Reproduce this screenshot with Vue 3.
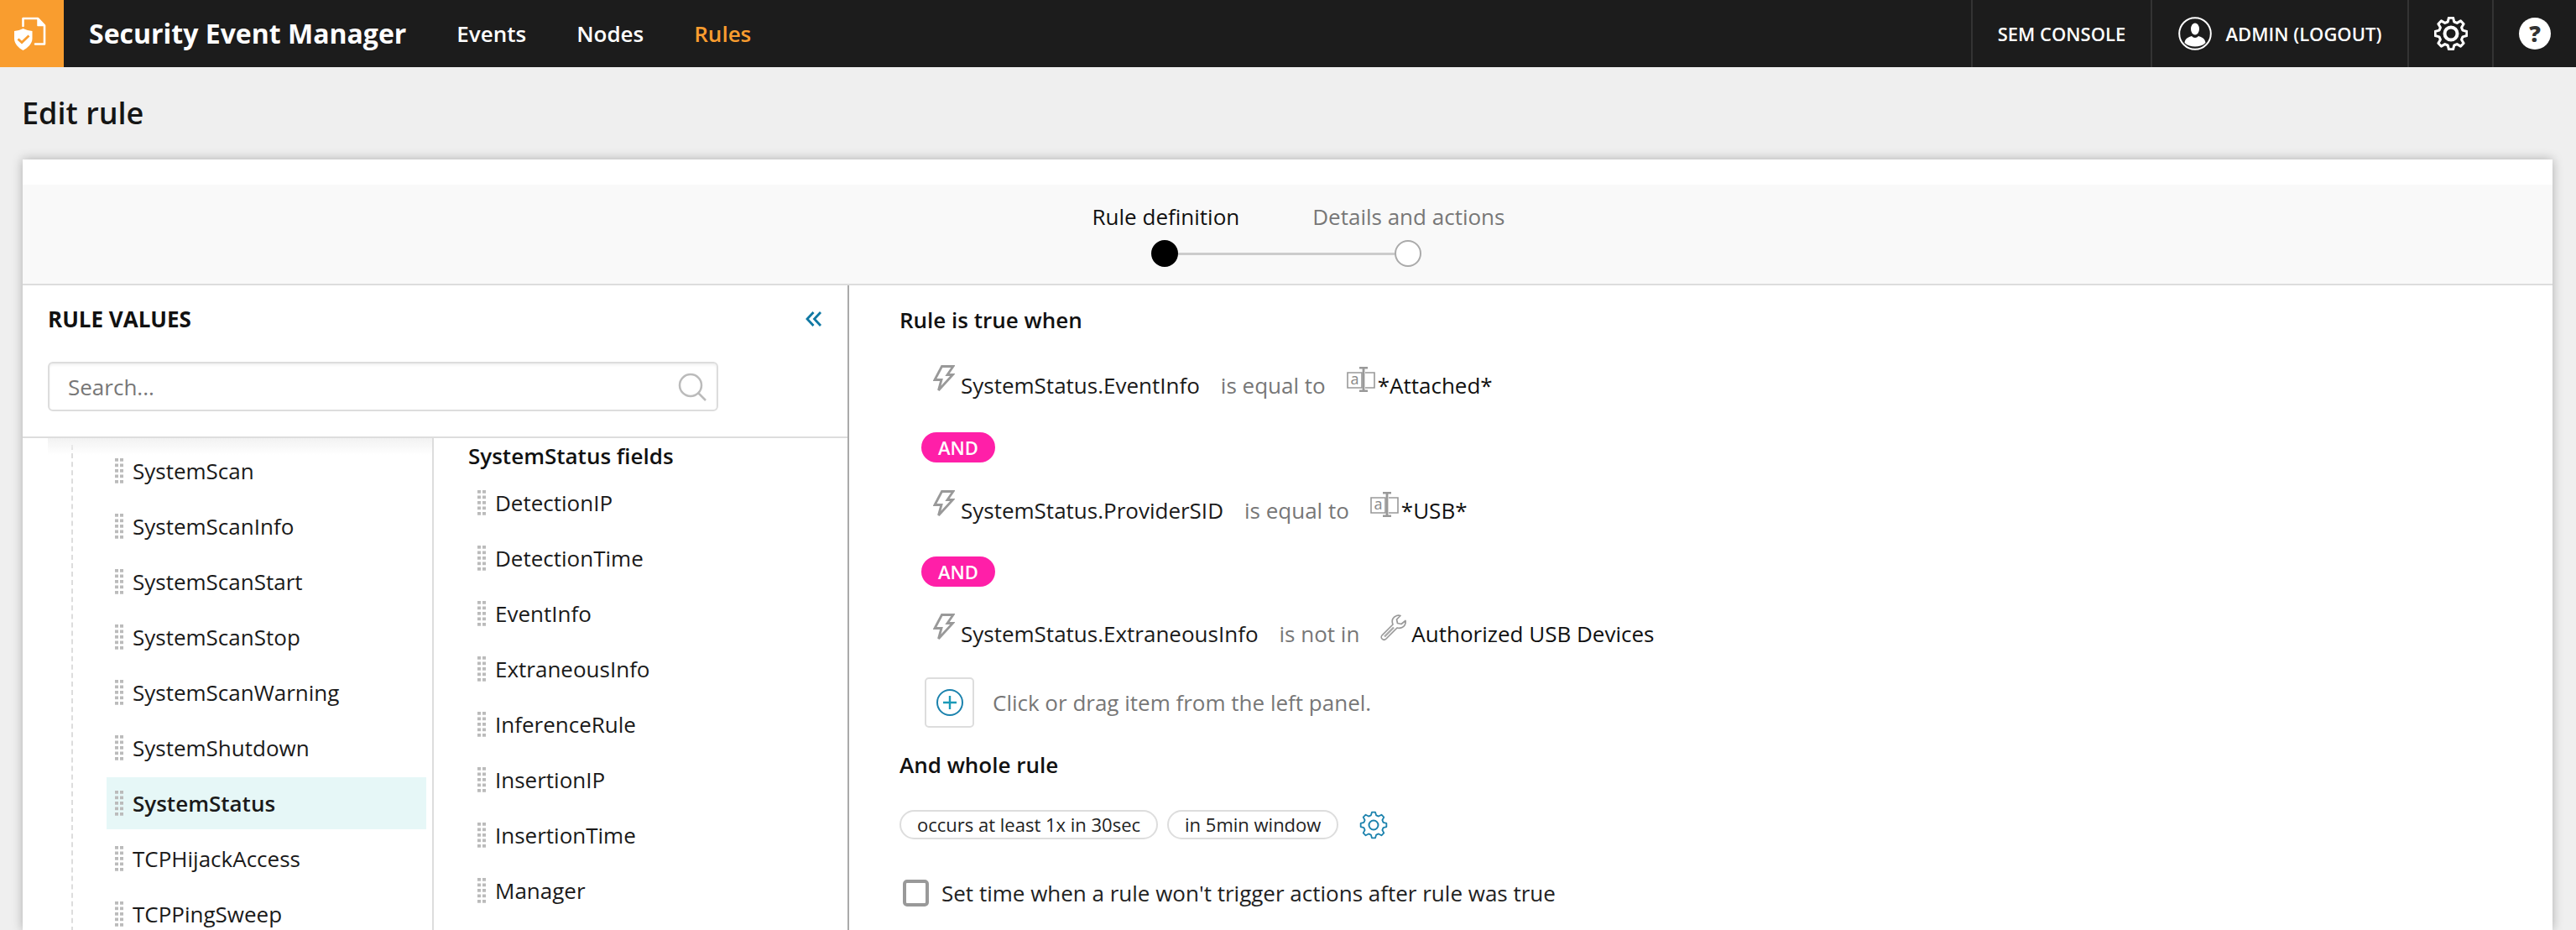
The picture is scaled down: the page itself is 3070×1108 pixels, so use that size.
<script setup>
const tree = ['SystemScan','SystemScanInfo','SystemScanStart','SystemScanStop','SystemScanWarning','SystemShutdown','SystemStatus','TCPHijackAccess','TCPPingSweep']
const fields = ['DetectionIP','DetectionTime','EventInfo','ExtraneousInfo','InferenceRule','InsertionIP','InsertionTime','Manager']

function gearPath(cx, cy, R, r, n) {
  const pts = []
  const step = (Math.PI * 2) / n
  for (let i = 0; i < n; i++) {
    const a = i * step - Math.PI / 2
    const p = (rad, off) => [cx + rad * Math.cos(a + off * step), cy + rad * Math.sin(a + off * step)]
    pts.push(p(r, -0.34), p(R, -0.17), p(R, 0.17), p(r, 0.34))
  }
  return 'M' + pts.map(q => q[0].toFixed(2) + ' ' + q[1].toFixed(2)).join('L') + 'Z'
}
const gear = gearPath(20, 20, 19, 14.5, 8)
const smallGear = gearPath(17, 17, 15.5, 12, 8)
</script>

<template>
  <div class="page">
    <header class="topbar">
      <div class="logo">
        <svg width="76" height="80" viewBox="0 0 76 80">
          <path d="M27.5 31V22H45L53 30.5V52.5H42" fill="none" stroke="#fff" stroke-width="2.6" stroke-linejoin="round" stroke-linecap="round"/>
          <path d="M45 22V30.5H53Z" fill="#fff" stroke="#fff" stroke-width="1.5" stroke-linejoin="round"/>
          <path d="M17 37C21 36.5 24.5 35.5 27.5 34C31 35.5 34.5 36.5 38.5 37V46C38.5 52 33 57 27.5 60C22 57 17 52 17 46Z" fill="#fff"/>
          <path d="M21.5 46.5L26 50.5L34.5 42.5" fill="none" stroke="#f99d2f" stroke-width="2.8"/>
        </svg>
      </div>
      <div class="brand">Security Event Manager</div>
      <nav class="nav">
        <a class="nav-link">Events</a>
        <a class="nav-link">Nodes</a>
        <a class="nav-link active">Rules</a>
      </nav>
      <div class="tools">
        <div class="tool console">SEM CONSOLE</div>
        <div class="tool user">
          <svg width="40" height="40" viewBox="0 0 40 40">
            <circle cx="20" cy="20" r="18.8" fill="none" stroke="#fff" stroke-width="2"/>
            <ellipse cx="20" cy="14.5" rx="5" ry="7" fill="#fff"/>
            <path d="M7.5 31C8 26 12 24 16 23C18 25.5 22 25.5 24 23C28 24 32 26 32.5 31C29 34.5 24.5 35.5 20 35.5C15.5 35.5 11 34.5 7.5 31Z" fill="#fff"/>
          </svg>
          <span>ADMIN (LOGOUT)</span>
        </div>
        <div class="tool gear-tool">
          <svg width="40" height="40" viewBox="0 0 40 40">
            <path :d="gear" fill="none" stroke="#fff" stroke-width="3" stroke-linejoin="round"/>
            <circle cx="20" cy="20" r="7.5" fill="none" stroke="#fff" stroke-width="4"/>
          </svg>
        </div>
        <div class="tool help-tool"><span class="help">?</span></div>
      </div>
    </header>

    <h1 class="page-title">Edit rule</h1>

    <main class="card">
      <section class="stepper">
        <div class="step-labels">
          <span class="step-label current">Rule definition</span>
          <span class="step-label">Details and actions</span>
        </div>
        <div class="step-track">
          <span class="dot filled"></span>
          <span class="line"></span>
          <span class="dot"></span>
        </div>
      </section>

      <div class="body">
        <aside class="left">
          <div class="left-head">
            <div class="left-title-row">
              <h2 class="left-title">RULE VALUES</h2>
              <svg width="20" height="18" viewBox="0 0 20 18">
                <path d="M9.5 1L2 9L9.5 17M18 1L10.5 9L18 17" fill="none" stroke="#0f78a3" stroke-width="2.8"/>
              </svg>
            </div>
            <div class="search">
              <input class="search-input" placeholder="Search..." />
              <svg width="34" height="34" viewBox="0 0 34 34">
                <circle cx="15" cy="15" r="13" fill="none" stroke="#bbb" stroke-width="2.5"/>
                <path d="M24.5 24.5L33 33" stroke="#bbb" stroke-width="2.5"/>
              </svg>
            </div>
          </div>
          <div class="lists">
            <div class="tree">
              <ul class="tree-list">
                <li v-for="t in tree" :key="t" class="tree-row" :class="{ selected: t === 'SystemStatus' }">
                  <span class="grip"></span>{{ t }}
                </li>
              </ul>
              <div class="fade"></div>
            </div>
            <div class="fields">
              <div class="fields-title">SystemStatus fields</div>
              <div v-for="f in fields" :key="f" class="field-row">
                <span class="grip"></span>{{ f }}
              </div>
            </div>
          </div>
        </aside>

        <section class="right">
          <h3 class="section-title first">Rule is true when</h3>

          <div class="rule rule-a">
            <svg class="bolt" width="26" height="32" viewBox="0 0 26 32"><path d="M10.5 1.5H24L17 11.5H23.5L6.5 30L10 17.5H2Z" fill="none" stroke="#999" stroke-width="2.8" stroke-linejoin="miter"/></svg>
            <span class="field">SystemStatus.EventInfo</span>
            <span class="op">is equal to</span>
            <svg class="text-icon" width="34" height="30" viewBox="0 0 34 30">
              <path d="M1 7H18V25H1ZM22 7H33V25H22" fill="none" stroke="#999" stroke-width="1.6"/>
              <path d="M15 1H25M20 1V29M15 29H25" fill="none" stroke="#999" stroke-width="2.8"/>
              <text x="4.5" y="21" font-size="18" fill="#888" font-family="Open Sans, sans-serif">a</text>
            </svg>
            <span class="value">*Attached*</span>
          </div>

          <div class="and and-a">AND</div>

          <div class="rule rule-b">
            <svg class="bolt" width="26" height="32" viewBox="0 0 26 32"><path d="M10.5 1.5H24L17 11.5H23.5L6.5 30L10 17.5H2Z" fill="none" stroke="#999" stroke-width="2.8" stroke-linejoin="miter"/></svg>
            <span class="field">SystemStatus.ProviderSID</span>
            <span class="op">is equal to</span>
            <svg class="text-icon" width="34" height="30" viewBox="0 0 34 30">
              <path d="M1 7H18V25H1ZM22 7H33V25H22" fill="none" stroke="#999" stroke-width="1.6"/>
              <path d="M15 1H25M20 1V29M15 29H25" fill="none" stroke="#999" stroke-width="2.8"/>
              <text x="4.5" y="21" font-size="18" fill="#888" font-family="Open Sans, sans-serif">a</text>
            </svg>
            <span class="value">*USB*</span>
          </div>

          <div class="and and-b">AND</div>

          <div class="rule rule-c">
            <svg class="bolt" width="26" height="32" viewBox="0 0 26 32"><path d="M10.5 1.5H24L17 11.5H23.5L6.5 30L10 17.5H2Z" fill="none" stroke="#999" stroke-width="2.8" stroke-linejoin="miter"/></svg>
            <span class="field">SystemStatus.ExtraneousInfo</span>
            <span class="op">is not in</span>
            <svg class="wrench" width="32" height="32" viewBox="0 0 32 32">
              <path d="M2 25L15 12C13 7 15 3 19.5 1.5C21 1 22.5 1 24 1.5L19.5 6L20.5 10.5L25 11.5L30 7.5C30.5 11 29 14 26 15.5C24 16.5 21.5 16.5 20 16L7 29C5.5 30.5 3.5 30.5 2 29C1 28 1 26 2 25Z" fill="none" stroke="#999" stroke-width="1.7" stroke-linejoin="round"/>
              <path d="M5 26.5L16 15.5" stroke="#aaa" stroke-width="2.4"/>
            </svg>
            <span class="value">Authorized USB Devices</span>
          </div>

          <div class="add-row">
            <button class="add-btn" type="button">
              <svg width="32" height="32" viewBox="0 0 32 32">
                <circle cx="16" cy="16" r="15" fill="none" stroke="#1b82ad" stroke-width="2"/>
                <path d="M16 8V24M8 16H24" stroke="#1b9ab8" stroke-width="2.4"/>
              </svg>
            </button>
            <span class="hint">Click or drag item from the left panel.</span>
          </div>

          <h3 class="section-title second">And whole rule</h3>

          <div class="pills">
            <span class="pill">occurs at least 1x in 30sec</span>
            <span class="pill">in 5min window</span>
            <svg class="pill-gear" width="34" height="34" viewBox="0 0 34 34">
              <path :d="smallGear" fill="none" stroke="#1b82ad" stroke-width="1.8" stroke-linejoin="round"/>
              <circle cx="17" cy="17" r="5.5" fill="none" stroke="#1b82ad" stroke-width="2"/>
            </svg>
          </div>

          <label class="check-row">
            <input class="check" type="checkbox" />
            <span>Set time when a rule won't trigger actions after rule was true</span>
          </label>
        </section>
      </div>
    </main>
  </div>
</template>

<style>
html, body { margin: 0; padding: 0; background: #efefef; }
</style>

<style scoped>
* { box-sizing: border-box; }
.page {
  height: 1108px;
  overflow: hidden;
  background: #efefef;
  font-family: "Open Sans", sans-serif;
  color: #111;
  display: flex;
  flex-direction: column;
}
.topbar {
  height: 80px;
  flex: none;
  background: #1c1c1c;
  display: flex;
  align-items: stretch;
  color: #fff;
}
.logo { width: 76px; background: #f99d2f; flex: none; }
.logo svg { display: block; }
.brand {
  margin-left: 30px;
  font-size: 32px;
  font-weight: 700;
  line-height: 80px;
  white-space: nowrap;
}
.nav { display: flex; margin-left: 60px; gap: 60px; align-items: center; }
.nav-link { font-size: 26px; font-weight: 600; }
.nav-link.active { color: #f99d2f; }
.tools { margin-left: auto; display: flex; }
.tool {
  border-left: 2px solid #333;
  display: flex;
  align-items: center;
  justify-content: center;
  font-size: 22px;
  font-weight: 600;
  white-space: nowrap;
}
.console { width: 214px; }
.user { width: 306px; gap: 17px; }
.gear-tool { width: 101px; }
.help-tool { width: 100px; }
.help {
  width: 38px;
  height: 38px;
  border-radius: 50%;
  background: #fff;
  color: #333;
  font-size: 27px;
  font-weight: 800;
  line-height: 38px;
  text-align: center;
}
.page-title {
  margin: 0;
  height: 110px;
  padding: 30px 0 0 26px;
  font-size: 36px;
  font-weight: 600;
  line-height: 50px;
  color: #151515;
  flex: none;
}
.card {
  margin: 0 28px 0 27px;
  flex: 1;
  min-height: 0;
  background: #fff;
  box-shadow: 0 0 12px rgba(0, 0, 0, 0.28);
  display: flex;
  flex-direction: column;
  padding-top: 30px;
}
.stepper {
  height: 120px;
  flex: none;
  background: #f9f9f9;
  border-bottom: 2px solid #ddd;
  display: flex;
  flex-direction: column;
  align-items: center;
  padding-top: 20px;
}
.step-labels { display: flex; gap: 87px; margin-left: 26px; }
.step-label { font-size: 26px; line-height: 36px; color: #777; white-space: nowrap; }
.step-label.current { color: #111; }
.step-track { display: flex; align-items: center; margin-top: 10px; margin-left: -4px; }
.dot {
  width: 32px;
  height: 32px;
  border-radius: 50%;
  border: 2px solid #aaa;
  background: #fff;
}
.dot.filled { background: #000; border-color: #000; }
.line { width: 258px; height: 3px; background: #ccc; }
.body { flex: 1; min-height: 0; display: flex; }
.left {
  width: 985px;
  flex: none;
  border-right: 2px solid #aaa;
  display: flex;
  flex-direction: column;
}
.left-head {
  height: 182px;
  flex: none;
  border-bottom: 2px solid #ddd;
  padding: 0 30px 0 30px;
}
.left-title-row {
  display: flex;
  align-items: center;
  justify-content: space-between;
  height: 80px;
}
.left-title { margin: 0; font-size: 26px; font-weight: 700; }
.search {
  width: 799px;
  height: 59px;
  margin-top: 11px;
  border: 2px solid #ddd;
  border-radius: 6px;
  box-shadow: inset 0 2px 3px rgba(0, 0, 0, 0.06);
  display: flex;
  align-items: center;
  padding: 0 12px 0 20px;
}
.search-input {
  flex: 1;
  min-width: 0;
  border: 0;
  outline: 0;
  background: transparent;
  font: 400 26px "Open Sans", sans-serif;
}
.search-input::placeholder { color: #777; opacity: 1; }
.lists { flex: 1; min-height: 0; display: flex; }
.tree {
  width: 490px;
  flex: none;
  border-right: 2px solid #ddd;
  overflow: hidden;
  position: relative;
  padding-top: 8px;
}
.fade {
  position: absolute;
  left: 30px;
  right: 0;
  top: 0;
  height: 20px;
  background: linear-gradient(#f2f2f2, rgba(255, 255, 255, 0));
}
.tree-list {
  list-style: none;
  margin: 0 0 0 58px;
  padding: 0 0 0 40px;
  border-left: 2px dashed #ddd;
  display: flex;
  flex-direction: column;
  gap: 4px;
}
.tree-row {
  height: 62px;
  width: 381px;
  flex: none;
  display: flex;
  align-items: center;
  gap: 11px;
  padding-left: 10px;
  font-size: 26px;
  white-space: nowrap;
  color: #1a1a1a;
}
.tree-row.selected { background: #e6f7f7; font-weight: 600; }
.grip {
  width: 10px;
  height: 30px;
  flex: none;
  background: linear-gradient(90deg, #bbb 4px, transparent 4px) 0 0 / 6px 100%;
  -webkit-mask: linear-gradient(#000 4px, transparent 4px) 0 0 / 100% 6.5px;
  mask: linear-gradient(#000 4px, transparent 4px) 0 0 / 100% 6.5px;
}
.fields { flex: 1; padding-left: 41px; overflow: hidden; }
.fields-title { height: 44px; font-size: 26px; font-weight: 600; line-height: 42px; white-space: nowrap; }
.field-row {
  height: 66px;
  display: flex;
  align-items: center;
  gap: 11px;
  padding-left: 11px;
  font-size: 26px;
  color: #1a1a1a;
  white-space: nowrap;
}
.right { flex: 1; min-width: 0; padding: 23px 0 0 60px; }
.section-title { margin: 0; font-size: 26px; font-weight: 600; line-height: 36px; }
.section-title.second { margin-top: 26px; }
.rule {
  height: 60px;
  padding-left: 40px;
  display: flex;
  align-items: center;
  font-size: 26px;
  white-space: nowrap;
}
.rule-a { margin-top: 30px; }
.rule-b { margin-top: 27px; }
.rule-c { margin-top: 26px; }
.bolt { align-self: flex-start; margin-top: 6px; flex: none; margin-right: 7px; }
.field { color: #1a1a1a; }
.op { color: #777; margin: 0 25px; }
.text-icon { align-self: flex-start; margin-top: 8px; margin-right: 3px; flex: none; }
.wrench { align-self: flex-start; margin-top: 7px; margin-right: 5px; flex: none; }
.value { color: #111; }
.and {
  width: 88px;
  height: 36px;
  margin-left: 26px;
  border-radius: 18px;
  background: #ff1fa8;
  color: #fff;
  font-size: 22px;
  font-weight: 600;
  line-height: 36px;
  text-align: center;
}
.and-a { margin-top: 26px; }
.and-b { margin-top: 25px; }
.add-row { display: flex; align-items: center; margin: 22px 0 0 30px; gap: 22px; }
.add-btn {
  width: 59px;
  height: 60px;
  padding: 0;
  border: 2px solid #ddd;
  border-radius: 5px;
  background: #fff;
  display: flex;
  align-items: center;
  justify-content: center;
}
.hint { font-size: 26px; color: #777; white-space: nowrap; }
.pills { display: flex; align-items: center; gap: 11px; margin-top: 36px; height: 35px; }
.pill {
  height: 35px;
  padding: 0 19px;
  border: 2px solid #ddd;
  border-radius: 18px;
  font-size: 22px;
  line-height: 31px;
  color: #222;
  white-space: nowrap;
}
.pill-gear { margin-left: 14px; flex: none; }
.check-row {
  display: flex;
  align-items: center;
  gap: 15px;
  margin: 46px 0 0 4px;
  font-size: 26px;
  color: #222;
  white-space: nowrap;
}
.check {
  appearance: none;
  width: 31px;
  height: 32px;
  margin: 0;
  border: 4px solid #999;
  border-radius: 5px;
  background: #fff;
}
</style>
